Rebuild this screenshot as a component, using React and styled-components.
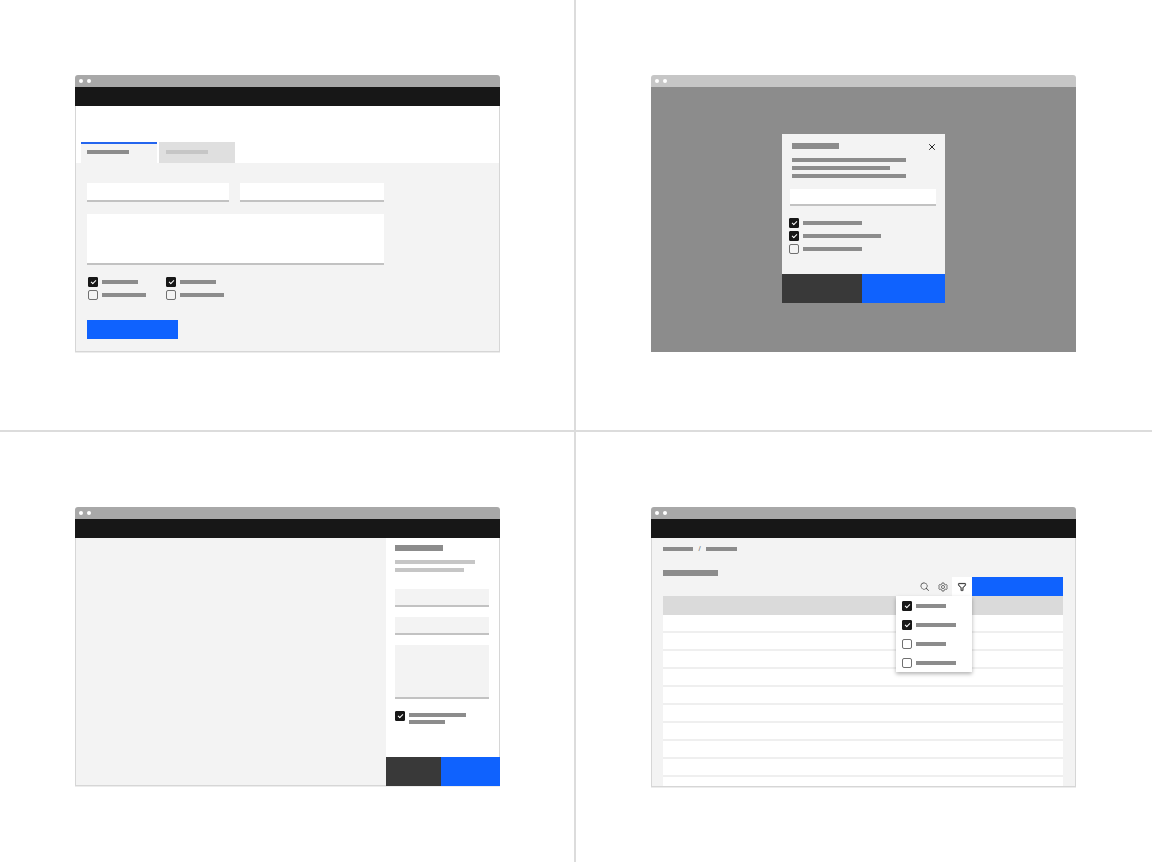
import styled, { createGlobalStyle } from "styled-components";

const GlobalStyle = createGlobalStyle`
  *,
  *::before,
  *::after {
    box-sizing: border-box;
  }
  body {
    margin: 0;
    background: #fff;
    font-family: "Liberation Sans", Arial, sans-serif;
  }
`;

const Board = styled.main`
  display: grid;
  grid-template-columns: 1fr 1fr;
  grid-template-rows: auto 1fr;
  min-height: 100vh;
`;

const Cell = styled.section`
  padding: 75px 76px 74px 75px;
  border: 0 solid #dcdcdc;
  box-shadow: ${(p) => (p.$divider ? "inset -2px 0 #dcdcdc" : "none")};
`;

const TopCell = styled(Cell)`
  padding-bottom: 78px;
  border-bottom-width: 2px;
`;

const Window = styled.article`
  display: flex;
  flex-direction: column;
  border-radius: 3px 3px 0 0;
`;

const TitleBar = styled.header`
  display: flex;
  align-items: center;
  gap: 4px;
  height: 12px;
  padding-left: 4px;
  border-radius: 3px 3px 0 0;
  background: ${(p) => (p.$dimmed ? "#c6c6c6" : "#a8a8a8")};
`;

const Dot = styled.span`
  width: 4px;
  height: 4px;
  border-radius: 50%;
  background: #fff;
`;

const NavBar = styled.nav`
  height: 19px;
  background: #171717;
`;

const Body = styled.div`
  border: 1px solid #d6d6d6;
  border-top: 0;
  box-shadow: 0 1px 0 #ececec;
  background: #f3f3f3;
`;

const Line = styled.span`
  display: block;
  flex: none;
  width: ${(p) => p.$width}px;
  height: ${(p) => (p.$heading ? 6 : 4)}px;
  background: ${(p) => (p.$light ? "#c6c6c6" : "#8c8c8c")};
`;

const Lines = styled.div`
  display: flex;
  flex-direction: column;
  gap: ${(p) => p.$gap || 4}px;
`;

const Input = styled.input`
  display: block;
  width: 100%;
  height: ${(p) => p.$height}px;
  margin: 0;
  padding: 0 4px;
  border: 0;
  border-bottom: 2px solid #c2c2c2;
  border-radius: 0;
  outline: none;
  background: ${(p) => (p.$grey ? "#f3f3f3" : "#fff")};
  font-size: 8px;
`;

const TextArea = styled(Input).attrs({ as: "textarea" })`
  resize: none;
`;

const Button = styled.button`
  display: block;
  flex: ${(p) => (p.$width ? "none" : 1)};
  width: ${(p) => (p.$width ? `${p.$width}px` : "auto")};
  height: ${(p) => p.$height || 19}px;
  padding: 0;
  border: 0;
  background: ${(p) => (p.$secondary ? "#393939" : "#0f62fe")};
  cursor: pointer;
`;

const IconButton = styled.button`
  display: flex;
  align-items: center;
  justify-content: center;
  width: ${(p) => p.$width}px;
  padding: 0;
  border: 0;
  background: ${(p) => (p.$open ? "#fff" : "transparent")};
  color: #262626;
  cursor: pointer;
`;

const CheckLabel = styled.label`
  display: flex;
  align-items: ${(p) => (p.$multiline ? "flex-start" : "center")};
  gap: 4px;
  min-height: 10px;
`;

const CheckBox = styled.input.attrs({ type: "checkbox" })`
  display: flex;
  align-items: flex-start;
  justify-content: center;
  flex: none;
  appearance: none;
  width: 10px;
  height: 10px;
  margin: 0;
  padding-top: 2px;
  border: 1px solid #707070;
  border-radius: 2px;
  &:checked {
    border-color: #171717;
    border-radius: 1px;
    background: #171717;
  }
  &:checked::before {
    content: "";
    width: 5px;
    height: 3px;
    border: solid #fff;
    border-width: 0 0 1px 1px;
    transform: rotate(-45deg);
  }
`;

const Check = ({ name, checked, width, children }) => (
  <CheckLabel $multiline={Boolean(children)}>
    <CheckBox defaultChecked={checked} aria-label={name} />
    {children || <Line $width={width} />}
  </CheckLabel>
);

const BrowserBar = ({ dimmed }) => (
  <TitleBar $dimmed={dimmed}>
    <Dot />
    <Dot />
  </TitleBar>
);

/* Form page */

const TabStrip = styled.div`
  display: flex;
  align-items: flex-end;
  gap: 2px;
  height: 57px;
  padding-left: 5px;
  background: #fff;
`;

const Tab = styled.button`
  display: flex;
  align-items: flex-start;
  width: 76px;
  height: 21px;
  padding: 6px 0 0 ${(p) => (p.$active ? 6 : 7)}px;
  border: 0;
  border-top: 2px solid ${(p) => (p.$active ? "#2465ee" : "#dfdfdf")};
  background: ${(p) => (p.$active ? "#f3f3f3" : "#dfdfdf")};
`;

const Form = styled.form`
  padding: 20px 115px 12px 11px;
`;

const Fields = styled.div`
  display: grid;
  grid-template-columns: 142fr 144fr;
  gap: 12px 11px;
  margin-bottom: 12px;
`;

const FullField = styled.div`
  grid-column: 1 / -1;
`;

const CheckColumns = styled.div`
  display: grid;
  grid-template-columns: 78px 78px;
  gap: 3px 0;
  padding: 0 0 20px 1px;
`;

const FormPage = () => (
  <Window>
    <BrowserBar />
    <NavBar />
    <Body>
      <TabStrip role="tablist">
        <Tab $active role="tab" aria-selected="true" aria-label="First tab">
          <Line $width={42} />
        </Tab>
        <Tab role="tab" aria-selected="false" aria-label="Second tab">
          <Line $width={42} $light />
        </Tab>
      </TabStrip>
      <Form onSubmit={(e) => e.preventDefault()}>
        <Fields>
          <Input $height={19} aria-label="First field" />
          <Input $height={19} aria-label="Second field" />
          <FullField>
            <TextArea $height={51} aria-label="Description" />
          </FullField>
        </Fields>
        <CheckColumns>
          <Check name="Option 1" checked width={36} />
          <Check name="Option 2" checked width={36} />
          <Check name="Option 3" width={44} />
          <Check name="Option 4" width={44} />
        </CheckColumns>
        <Button $width={91} aria-label="Submit" />
      </Form>
    </Body>
  </Window>
);

/* Modal */

const Overlay = styled.div`
  display: flex;
  justify-content: center;
  padding: 47px 0 49px;
  background: #8c8c8c;
`;

const Modal = styled.div`
  width: 163px;
  background: #f3f3f3;
`;

const ModalContent = styled.div`
  padding: 9px 9px 20px 7px;
`;

const ModalHeader = styled.div`
  display: flex;
  justify-content: space-between;
  padding-left: 3px;
  margin-bottom: 7px;
`;

const ModalText = styled.div`
  padding-left: 3px;
  margin-bottom: 11px;
`;

const ModalField = styled.div`
  padding-left: 1px;
  margin-bottom: 12px;
`;

const ButtonRow = styled.div`
  display: flex;
`;

const CloseIcon = () => (
  <svg width="8" height="8" viewBox="0 0 8 8" stroke="currentColor">
    <path d="M1.2 1.2 6.8 6.8M6.8 1.2 1.2 6.8" fill="none" />
  </svg>
);

const ModalPage = () => (
  <Window>
    <BrowserBar dimmed />
    <Overlay>
      <Modal role="dialog" aria-label="Modal">
        <ModalContent>
          <ModalHeader>
            <Line $width={47} $heading />
            <IconButton $width={8} aria-label="Close">
              <CloseIcon />
            </IconButton>
          </ModalHeader>
          <ModalText>
            <Lines>
              <Line $width={114} />
              <Line $width={98} />
              <Line $width={114} />
            </Lines>
          </ModalText>
          <ModalField>
            <Input $height={17} aria-label="Modal field" />
          </ModalField>
          <Lines $gap={3}>
            <Check name="Choice 1" checked width={59} />
            <Check name="Choice 2" checked width={78} />
            <Check name="Choice 3" width={59} />
          </Lines>
        </ModalContent>
        <ButtonRow>
          <Button $width={80} $height={29} $secondary aria-label="Cancel" />
          <Button $height={29} aria-label="Save" />
        </ButtonRow>
      </Modal>
    </Overlay>
  </Window>
);

/* Side panel */

const PanelBody = styled(Body)`
  display: flex;
  justify-content: flex-end;
`;

const SidePanel = styled.aside`
  display: flex;
  flex-direction: column;
  width: 113px;
  background: #fff;
`;

const PanelContent = styled.div`
  padding: 7px 10px 33px 9px;
`;

const PanelText = styled.div`
  margin: 9px 0 17px;
`;

const PanelFields = styled.div`
  display: flex;
  flex-direction: column;
  gap: 10px;
  margin-bottom: 12px;
`;

const WrappedLines = styled(Lines)`
  padding-top: 2px;
`;

/* the footer runs over the window outline */
const PanelFooter = styled(ButtonRow)`
  margin: 0 -1px -1px 0;
`;

const PanelPage = () => (
  <Window>
    <BrowserBar />
    <NavBar />
    <PanelBody>
      <SidePanel>
        <PanelContent>
          <Line $width={48} $heading />
          <PanelText>
            <Lines>
              <Line $width={80} $light />
              <Line $width={69} $light />
            </Lines>
          </PanelText>
          <PanelFields>
            <Input $height={18} $grey aria-label="Panel field 1" />
            <Input $height={18} $grey aria-label="Panel field 2" />
            <TextArea $height={54} $grey aria-label="Panel notes" />
          </PanelFields>
          <Check name="Panel option" checked>
            <WrappedLines $gap={3}>
              <Line $width={57} />
              <Line $width={36} />
            </WrappedLines>
          </Check>
        </PanelContent>
        <PanelFooter>
          <Button $width={55} $height={29} $secondary aria-label="Cancel" />
          <Button $height={29} aria-label="Apply" />
        </PanelFooter>
      </SidePanel>
    </PanelBody>
  </Window>
);

/* Data table with an open filter menu */

const TableBody = styled(Body)`
  padding: 5px 12px 0 11px;
`;

const Breadcrumb = styled.div`
  display: flex;
  align-items: center;
  height: 12px;
  margin-bottom: 15px;
  color: #6f6f6f;
  font-size: 8px;
  line-height: 12px;
`;

const Slash = styled.span`
  width: 13px;
  text-align: center;
`;

const Toolbar = styled.div`
  display: flex;
  justify-content: flex-end;
  height: 19px;
  margin-top: 1px;
`;

const FilterWrap = styled.div`
  position: relative;
  display: flex;
`;

const FilterMenu = styled.div`
  position: absolute;
  top: 100%;
  right: 0;
  width: 76px;
  background: #fff;
  box-shadow: 0 2px 4px rgba(0, 0, 0, 0.3);
`;

const FilterItem = styled.div`
  display: flex;
  align-items: center;
  height: 19px;
  padding-left: 6px;
`;

const Table = styled.table`
  width: 100%;
  border-collapse: separate;
  border-spacing: 0;
  background: #fff;
`;

const HeadCell = styled.th`
  height: 19px;
  padding: 0;
  background: #dadada;
`;

const RowCell = styled.td`
  height: ${(p) => (p.$cut ? 9 : 18)}px;
  padding: 0;
  border-bottom: ${(p) => (p.$cut ? 0 : 2)}px solid #efefef;
`;

const SearchIcon = () => (
  <svg width="10" height="10" viewBox="0 0 32 32" fill="currentColor">
    <path d="M29 27.6l-7.6-7.6a11 11 0 1 0-1.4 1.4L27.6 29ZM4 13a9 9 0 1 1 9 9A9 9 0 0 1 4 13Z" />
  </svg>
);

const SettingsIcon = () => (
  <svg
    width="10"
    height="10"
    viewBox="0 0 32 32"
    fill="none"
    stroke="currentColor"
    strokeWidth="2"
    strokeLinejoin="round"
  >
    <path d="M13 3h6l1 4 3 2 4-1 3 5-3 3 3 3-3 5-4-1-3 2-1 4h-6l-1-4-3-2-4 1-3-5 3-3-3-3 3-5 4 1 3-2Z" />
    <circle cx="16" cy="16" r="5" />
  </svg>
);

const FilterIcon = () => (
  <svg
    width="10"
    height="10"
    viewBox="0 0 32 32"
    fill="currentColor"
    stroke="currentColor"
  >
    <path d="M18 28h-4a2 2 0 0 1-2-2v-7.600L4.600 11A2 2 0 0 1 4 9.600V6a2 2 0 0 1 2-2h20a2 2 0 0 1 2 2v3.600a2 2 0 0 1-.6 1.400L20 18.400V26a2 2 0 0 1-2 2ZM6 6v3.600l8 8V26h4v-8.400l8-8V6Z" />
  </svg>
);

const filters = [
  { name: "Filter 1", width: 30, checked: true },
  { name: "Filter 2", width: 40, checked: true },
  { name: "Filter 3", width: 30 },
  { name: "Filter 4", width: 40 },
];

const TablePage = () => (
  <Window>
    <BrowserBar />
    <NavBar />
    <TableBody>
      <Breadcrumb>
        <Line $width={30} />
        <Slash>/</Slash>
        <Line $width={31} />
      </Breadcrumb>
      <Line $width={55} $heading />
      <Toolbar>
        <IconButton $width={18} aria-label="Search">
          <SearchIcon />
        </IconButton>
        <IconButton $width={18} aria-label="Settings">
          <SettingsIcon />
        </IconButton>
        <FilterWrap>
          <IconButton $width={20} $open aria-label="Filter">
            <FilterIcon />
          </IconButton>
          <FilterMenu>
            {filters.map((f) => (
              <FilterItem key={f.name}>
                <Check {...f} />
              </FilterItem>
            ))}
          </FilterMenu>
        </FilterWrap>
        <Button $width={91} aria-label="Add" />
      </Toolbar>
      <Table>
        <thead>
          <tr>
            <HeadCell />
          </tr>
        </thead>
        <tbody>
          {Array.from({ length: 9 }, (_, i) => (
            <tr key={i}>
              <RowCell />
            </tr>
          ))}
          <tr>
            <RowCell $cut />
          </tr>
        </tbody>
      </Table>
    </TableBody>
  </Window>
);

const App = () => (
  <>
    <GlobalStyle />
    <Board>
      <TopCell $divider>
        <FormPage />
      </TopCell>
      <TopCell>
        <ModalPage />
      </TopCell>
      <Cell $divider>
        <PanelPage />
      </Cell>
      <Cell>
        <TablePage />
      </Cell>
    </Board>
  </>
);

export default App;
